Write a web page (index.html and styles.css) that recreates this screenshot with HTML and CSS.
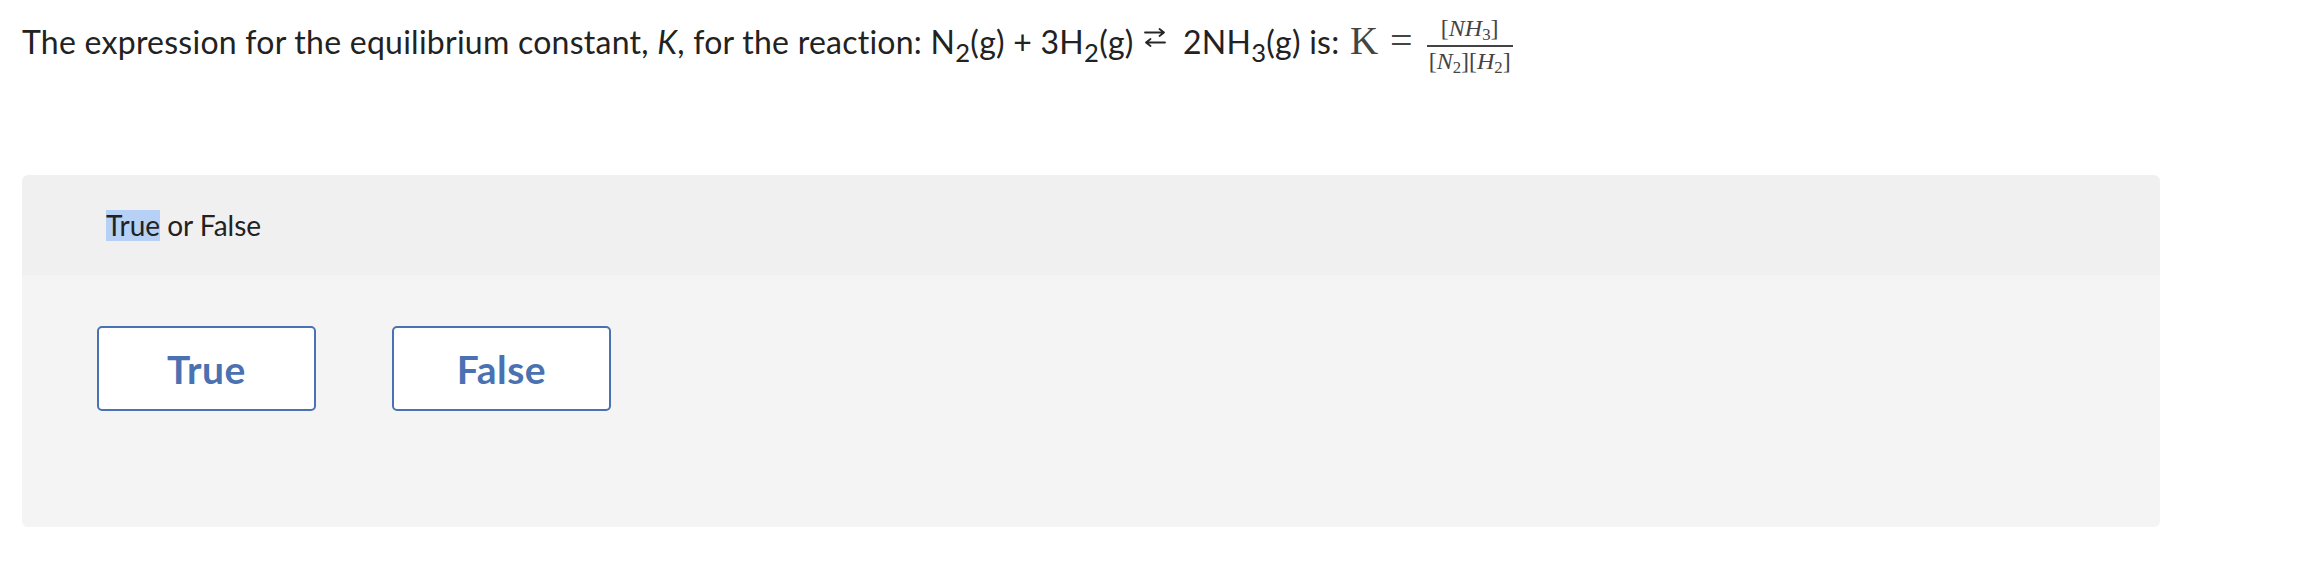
FILE: index.html
```html
<!DOCTYPE html>
<html lang="en">
<head>
<meta charset="utf-8">
<title>True or False</title>
<link rel="stylesheet" href="styles.css">
</head>
<body>
<div class="page">
  <p class="question">The expression for the equilibrium constant, <i>K</i>, for the reaction: N<sub>2</sub>(g) + 3H<sub>2</sub>(g) <svg class="arrows" width="22" height="20" viewBox="0 0 22 20" aria-hidden="true"><path d="M1 5.5H20M15.5 2L20 5.5L15.5 9" fill="none" stroke="#262626" stroke-width="1.8" stroke-linecap="round" stroke-linejoin="round"/><path d="M21 15.5H2M6.5 12L2 15.5L6.5 19" fill="none" stroke="#262626" stroke-width="1.8" stroke-linecap="round" stroke-linejoin="round"/></svg>&nbsp; 2NH<sub>3</sub>(g) is: <span class="math"><span class="mk">K</span><span class="meq">=</span><span class="frac"><span class="num">[<i>N</i><i>H</i><sub>3</sub>]</span><span class="bar"></span><span class="den">[<i>N</i><sub>2</sub>][<i>H</i><sub>2</sub>]</span></span></span></p>
  <div class="panel">
    <div class="panel-head"><span class="sel">True</span>&nbsp;or False</div>
    <div class="panel-body">
      <button class="choice" type="button">True</button>
      <button class="choice" type="button">False</button>
    </div>
  </div>
</div>
</body>
</html>
```
FILE: styles.css
```css
html, body {
  margin: 0;
  padding: 0;
  background: #ffffff;
}

body {
  font-family: Lato, "Open Sans", sans-serif;
  color: #222222;
}

.page {
  padding: 0 22px;
  width: 2138px;
}

.question {
  margin: 0;
  padding-top: 6px;
  font-size: 32px;
  line-height: 70px;
  height: 70px;
  letter-spacing: 0.25px;
  white-space: nowrap;
}

.question sub {
  font-size: 0.8em;
  vertical-align: -0.32em;
  line-height: 0;
}

.arrows {
  vertical-align: 7px;
  margin-left: 2px;
}

.math {
  font-family: "Liberation Serif", "Times New Roman", serif;
  color: #444444;
  margin-left: 2px;
  letter-spacing: 0;
  white-space: nowrap;
}

.mk {
  font-size: 39px;
}

.meq {
  font-size: 40px;
  margin: 0 14px 0 12px;
}

.frac {
  display: inline-flex;
  flex-direction: column;
  align-items: center;
  vertical-align: 18px;
  font-size: 24px;
  line-height: 24px;
}

.frac i {
  font-style: italic;
}

.frac sub {
  font-size: 0.7em;
  vertical-align: -0.25em;
  line-height: 0;
}

.num {
  padding: 0 8px 5px;
}

.bar {
  align-self: stretch;
  height: 1.5px;
  background: #444444;
}

.den {
  padding: 2px 2px 0;
}

.panel {
  margin-top: 99px;
  border-radius: 6px;
  overflow: hidden;
}

.panel-head {
  height: 100px;
  background: #f0f0f0;
  display: flex;
  align-items: center;
  padding-left: 84px;
  font-size: 28px;
}

.sel {
  background: #b6d1f5;
  line-height: 31px;
}

.panel-body {
  height: 201px;
  background: #f4f4f4;
  padding: 51px 0 0 75px;
  display: flex;
  gap: 76px;
  align-items: flex-start;
}

.choice {
  width: 219px;
  height: 85px;
  background: #ffffff;
  border: 2px solid #4a72b2;
  border-radius: 5px;
  font-family: Lato, "Open Sans", sans-serif;
  font-weight: 700;
  font-size: 39px;
  letter-spacing: 0.5px;
  color: #4a72b2;
  padding: 0;
  cursor: pointer;
}
```
